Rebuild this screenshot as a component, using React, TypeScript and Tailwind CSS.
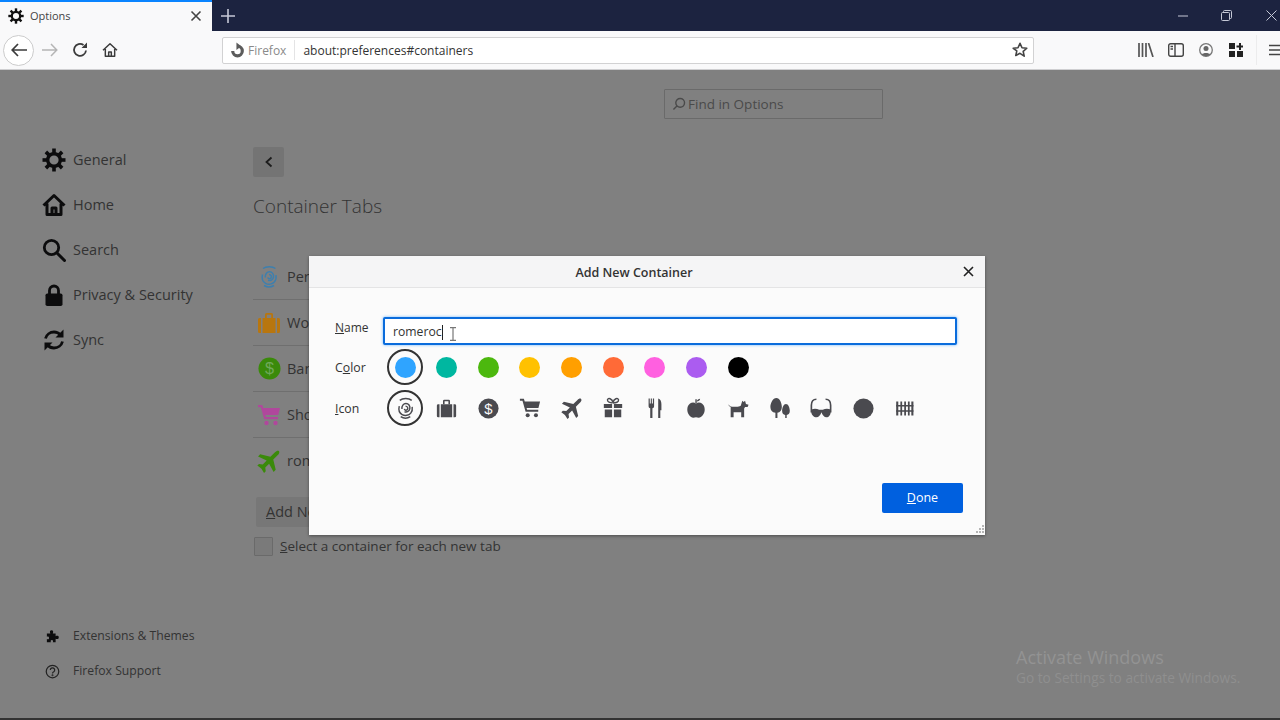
import type { ReactNode } from "react";

const uiFont = { fontFamily: '"Open Sans", "Noto Sans", sans-serif' };

function Svg({ size = 24, className, children }: { size?: number; className?: string; children: ReactNode }) {
  return (
    <svg width={size} height={size} viewBox="0 0 24 24" fill="currentColor" className={className}>
      {children}
    </svg>
  );
}

function Gear({ size }: { size: number }) {
  const spokes = [0, 45, 90, 135, 180, 225, 270, 315];
  return (
    <Svg size={size}>
      {spokes.map((a) => (
        <rect key={a} x="10.2" y="0.5" width="3.6" height="6" transform={`rotate(${a} 12 12)`} />
      ))}
      <circle cx="12" cy="12" r="6.3" fill="none" stroke="currentColor" strokeWidth="3.4" />
    </Svg>
  );
}

function Home({ size, stroke = 3 }: { size: number; stroke?: number }) {
  return (
    <Svg size={size}>
      <path
        d="M1.5 12.500 12 2.500l10.500 10M5 10.500V21.500h14V10.500M10 21v-6h4v6"
        fill="none"
        stroke="currentColor"
        strokeWidth={stroke}
        strokeLinejoin="round"
      />
    </Svg>
  );
}

function SearchGlass({ size }: { size: number }) {
  return (
    <Svg size={size}>
      <circle cx="9.500" cy="9.500" r="7.200" fill="none" stroke="currentColor" strokeWidth="2.800" />
      <path d="m15 15 7.500 7.500" stroke="currentColor" strokeWidth="3" strokeLinecap="round" />
    </Svg>
  );
}

function Lock({ size }: { size: number }) {
  return (
    <Svg size={size}>
      <path d="M7.500 11V7.500a4.500 4.500 0 0 1 9 0V11" fill="none" stroke="currentColor" strokeWidth="2.800" />
      <rect x="3.500" y="10.500" width="17" height="12.500" rx="1.800" />
    </Svg>
  );
}

function Sync({ size }: { size: number }) {
  return (
    <Svg size={size}>
      <path d="M3.500 10.500C4.500 6.500 8 4 12 4c2.800 0 5 1.200 6.500 3" fill="none" stroke="currentColor" strokeWidth="2.800" />
      <path d="M21.500 1.500v8h-8z" />
      <path d="M20.500 13.500C19.500 17.500 16 20 12 20c-2.800 0-5-1.200-6.500-3" fill="none" stroke="currentColor" strokeWidth="2.800" />
      <path d="M2.500 22.500v-8h8z" />
    </Svg>
  );
}

function Puzzle({ size }: { size: number }) {
  return (
    <Svg size={size}>
      <path d="M3 7h5.500C7.500 5 7.500 2 10.500 2s3 3 2 5H17v4.500c2-1 5-1 5 2s-3 3-5 2V21h-4.500c1-2 .500-3.500-1.500-3.500S8.500 19 9.500 21H3v-5c2 1 3.500.500 3.500-1.500S5 11.500 3 12.500z" />
    </Svg>
  );
}

function Help({ size }: { size: number }) {
  return (
    <svg width={size} height={size} viewBox="0 0 24 24" fill="none" stroke="currentColor" strokeWidth="2">
      <circle cx="12" cy="12" r="10" />
      <path d="M8.500 9.500a3.500 3.500 0 1 1 5.500 3c-1.300.8-2 1.400-2 2.800" />
      <circle cx="12" cy="18" r="0.600" />
    </svg>
  );
}

// tall, narrow print: a spiral in the middle and open arcs above and below
function Fingerprint({ size }: { size: number }) {
  return (
    <svg width={size} height={size} viewBox="0 0 24 24" fill="none" stroke="currentColor" strokeWidth="1.500">
      <path d="M6 3.500C9 1 15.500 1 18.500 3.500" />
      <path d="M12 9.500c2 0 3 2 2 3.500-.9 1.300-3 .9-3.200-.6" />
      <path d="M8.300 12.500c-.4-3 1.500-5.700 4.200-5.700s4.500 2.500 4 5.300c-.5 2.800-3 4-5.500 3.300" />
      <path d="M5.500 9.500c-1 4 .3 7.300 3 8.800 3 1.700 7 1 9-1.500 1.500-1.800 1.900-4 1.500-6.600" />
      <path d="M7 20.500c3 1.900 7 1.900 10 0" />
    </svg>
  );
}

function Briefcase({ size }: { size: number }) {
  return (
    <Svg size={size}>
      <path d="M8 7V3.500A1.500 1.500 0 0 1 9.500 2h5A1.500 1.500 0 0 1 16 3.500V7h-1.800V3.800H9.800V7z" />
      <path d="M1 8.500A1.500 1.500 0 0 1 2.500 7H4v15H2.500A1.500 1.500 0 0 1 1 20.500zM5.500 7h13v15h-13zM20 7h1.500A1.500 1.500 0 0 1 23 8.500v12a1.500 1.500 0 0 1-1.500 1.500H20z" />
    </Svg>
  );
}

function Dollar({ size, inner }: { size: number; inner: string }) {
  return (
    <svg width={size} height={size} viewBox="0 0 24 24">
      <circle cx="12" cy="12" r="11.500" fill="currentColor" />
      <text x="12" y="18" textAnchor="middle" fontSize="17" fontFamily='"Liberation Sans", sans-serif' fill={inner}>
        $
      </text>
    </svg>
  );
}

function Cart({ size }: { size: number }) {
  return (
    <Svg size={size}>
      <path d="M1 2h4.300l1 3H23l-1.800 7H8.300l.5 2H21v2.200H7.200L3.800 4.200H1z" />
      <circle cx="9.500" cy="20" r="2.200" />
      <circle cx="18.500" cy="20" r="2.200" />
    </Svg>
  );
}

function Plane({ size }: { size: number }) {
  return (
    <Svg size={size}>
      <path
        transform="rotate(45 12 12)"
        d="M12 -2c1.300 0 2 1.800 2 3.500v6.500l9 5.500v3l-9-2.700v5.500l3 2.300v2.400l-4.500-1.100h-1L7 23.500v-2.400l3-2.300v-5.500L1 16.500v-3L10 8V1.500C10-.2 10.700-2 12-2z"
      />
    </Svg>
  );
}

function Gift({ size }: { size: number }) {
  return (
    <Svg size={size}>
      <path d="M11.500 6.500C9 6.500 5.500 5.500 6 3s5-1.500 6 3c1-4.500 5.500-5.500 6-3s-3 3.500-6 3.500" fill="none" stroke="currentColor" strokeWidth="1.600" />
      <path d="M2 7.500h9v4.500H2zM13 7.500h9v4.500h-9zM3 13.500h8V22H3zM13 13.500h8V22h-8z" />
    </Svg>
  );
}

function Cutlery({ size }: { size: number }) {
  return (
    <Svg size={size}>
      <path d="M5 1.500h1.300V7h1.100V1.500h1.200V7h1.100V1.500H11v8.500c0 1.300-.8 2-1.800 2.400V23H6.800V12.400C5.800 12 5 11.300 5 10z" />
      <path d="M15.500 23V1.500c2.500.5 3.500 3 3.500 6.500v6.500h-1.200V23z" />
    </Svg>
  );
}

function Apple({ size }: { size: number }) {
  return (
    <Svg size={size}>
      <path d="M11.300 6.500V2.500h1.500v4z" />
      <path d="M12.800 5c.5-2 2-3 3.700-3-.2 2-1.700 3-3.700 3z" />
      <path d="M12 7c2-1.200 4.500-1.200 6.500.1C20.500 8.500 21.500 11 21.500 14c0 4.500-3.500 8.500-6.500 8.500-1.200 0-2-.5-3-.5s-1.800.5-3 .5c-3 0-6.500-4-6.500-8.500 0-3 1-5.500 3-6.900C7.500 5.800 10 5.800 12 7z" />
    </Svg>
  );
}

function Dog({ size }: { size: number }) {
  return (
    <Svg size={size}>
      <path d="M1.500 8c.3 1.500 1 2.500 2.500 3v11h3.200v-5.500h8.300V22h3.200V12.500l1-1.500h2.800l1-2.500-2.800-1-1-3.500-1.500 1.500-1.500-1.500-1.700 5.500c-1.500 1-3 1-4.500 1H5.500C3.800 10.500 2.500 9.800 1.500 8z" />
    </Svg>
  );
}

function Trees({ size }: { size: number }) {
  return (
    <Svg size={size}>
      <path d="M8 1c3.700 0 6 5.500 6 10 0 3.700-2 6-4.800 6.200V23H7v-5.800C3.500 17 1.500 14.700 1.500 11 1.500 6.500 4.300 1 8 1z" />
      <path d="M18.500 7.500c2.500 0 4.200 4 4.200 7.500 0 2.700-1.300 4.400-3.400 4.700V23h-1.600v-3.300c-2.100-.3-3.400-2-3.400-4.700 0-3.500 1.700-7.500 4.200-7.500z" />
    </Svg>
  );
}

function Glasses({ size }: { size: number }) {
  return (
    <Svg size={size}>
      <path d="M7 2.500C3.500 2.500 1.500 5 1.500 9v8" fill="none" stroke="currentColor" strokeWidth="1.800" />
      <path d="M17 2.500c3.500 0 5.500 2.500 5.500 6.500v8" fill="none" stroke="currentColor" strokeWidth="1.800" />
      <path d="M1.500 13.500c3-1 6-1 8.500.5h4c2.500-1.500 5.500-1.500 8.500-.5v3c0 3-2 5.500-4.500 5.500s-4.500-2.500-5.500-5.500c-1 3-3 5.500-5.500 5.500s-5.500-2.500-5.500-5.500z" />
    </Svg>
  );
}

function Fence({ size }: { size: number }) {
  return (
    <Svg size={size}>
      <path d="M2.500 4h2.400v16H2.500zM7.300 4h2v16h-2zM11.700 4h2v16h-2zM15.900 4h2v16h-2zM19.800 4h2.400v16h-2.400z" />
      <path d="M2.500 8h19.700v1.800H2.500zM2.500 14h19.700v1.800H2.500z" />
    </Svg>
  );
}

const colors = ["#2fa4ff", "#00b7a0", "#4cb80e", "#ffc100", "#ff9f00", "#ff6a37", "#ff60e0", "#ab5cf0", "#000000"];

const iconRow = [
  <Fingerprint size={23} />,
  <Briefcase size={21} />,
  <Dollar size={21} inner="#f9f9fa" />,
  <Cart size={22} />,
  <Plane size={22} />,
  <Gift size={22} />,
  <Cutlery size={22} />,
  <Apple size={22} />,
  <Dog size={22} />,
  <Trees size={22} />,
  <Glasses size={22} />,
  <Svg size={21}>
    <circle cx="12" cy="12" r="11.500" />
  </Svg>,
  <Fence size={21} />,
];

const nav = [
  { label: "General", icon: <Gear size={24} /> },
  { label: "Home", icon: <Home size={24} /> },
  { label: "Search", icon: <SearchGlass size={24} /> },
  { label: "Privacy & Security", icon: <Lock size={24} /> },
  { label: "Sync", icon: <Sync size={24} /> },
];

const containers = [
  { label: "Personal", color: "text-[#3d7fae]", icon: <Fingerprint size={24} /> },
  { label: "Work", color: "text-[#b8760f]", icon: <Briefcase size={24} /> },
  { label: "Banking", color: "text-[#3a8a0a]", icon: <Dollar size={23} inner="#6fa85a" /> },
  { label: "Shopping", color: "text-[#b0479c]", icon: <Cart size={24} /> },
  { label: "romero", color: "text-[#3a8a0a]", icon: <Plane size={24} /> },
];

function Swatch({ selected, children }: { selected?: boolean; children: ReactNode }) {
  return (
    <div
      className={`w-9 h-9 shrink-0 rounded-full flex items-center justify-center ${
        selected ? "border-2 border-[#333333]" : ""
      }`}
    >
      {children}
    </div>
  );
}

export default function App() {
  return (
    <div className="relative w-[1280px] h-[720px] overflow-hidden flex flex-col bg-[#808080]" style={uiFont}>
      {/* title bar */}
      <div className="h-[31px] shrink-0 flex bg-[#1c2340]">
        <div className="w-[212px] bg-[#f9f9fa] border-t-2 border-[#0a84ff] flex items-center pl-2 pr-[10px] pb-[1px]">
          <span className="text-[#111111]">
            <Gear size={16} />
          </span>
          <span className="ml-[6px] text-[11px] text-[#444444] flex-1">Options</span>
          <svg width="12" height="12" viewBox="0 0 12 12" stroke="#444444" strokeWidth="1.600">
            <path d="m1.500 1.500 9 9m0-9-9 9" />
          </svg>
        </div>
        <div className="w-8 flex items-center justify-center">
          <svg width="14" height="14" viewBox="0 0 14 14" stroke="#c5c8d6" strokeWidth="1.600">
            <path d="M7 0v14M0 7h14" />
          </svg>
        </div>
        <div className="flex-1" />
        <div className="flex items-center text-[#c5c8d6]">
          <svg width="10" height="2" viewBox="0 0 10 2" stroke="currentColor" className="mr-[33px]">
            <path d="M0 1h10" />
          </svg>
          <svg width="11" height="11" viewBox="0 0 11 11" fill="none" stroke="currentColor" className="mr-[34px]">
            <rect x="0.500" y="2.500" width="8" height="8" rx="1" />
            <path d="M2.500 2.500v-1a1 1 0 0 1 1-1h6a1 1 0 0 1 1 1v6a1 1 0 0 1-1 1h-1" />
          </svg>
          <svg width="11" height="11" viewBox="0 0 11 11" stroke="currentColor" className="mr-[3px]">
            <path d="m.5.5 10 10m0-10-10 10" />
          </svg>
        </div>
      </div>

      {/* toolbar */}
      <div className="h-[39px] shrink-0 flex items-center bg-[#f9f9fa] border-b border-[#cfcfd1] text-[#3b3b3b]">
        <div className="w-[31px] h-[31px] ml-[3px] shrink-0 rounded-full border border-[#cccccc] bg-white flex items-center justify-center">
          <svg width="16" height="14" viewBox="0 0 16 14" fill="none" stroke="currentColor" strokeWidth="1.700">
            <path d="M16 7H1.500M7 1 1.200 7 7 13" />
          </svg>
        </div>
        <svg width="16" height="14" viewBox="0 0 16 14" fill="none" stroke="#b5b5b5" strokeWidth="1.500" className="ml-[8px] shrink-0">
          <path d="M0 7h14.500M9 1l5.800 6L9 13" />
        </svg>
        <svg width="16" height="16" viewBox="0 0 16 16" fill="none" stroke="currentColor" strokeWidth="1.800" className="ml-[14px] shrink-0">
          <path d="M14 8.500A6 6 0 1 1 11.500 3" />
          <path d="M15 .5v5.500H9.500z" fill="currentColor" stroke="none" />
        </svg>
        <span className="ml-[14px] shrink-0">
          <Home size={16} stroke={2.2} />
        </span>
        <div className="ml-[104px] w-[812px] h-[27px] shrink-0 rounded-[2px] border border-[#d2d2d3] bg-white flex items-center">
          <svg width="17" height="17" viewBox="0 0 16 16" className="ml-[6px] text-[#5c5c5c]">
            <path d="M8 2.500a6 6 0 1 1-6 6h3a3 3 0 1 0 3-3z" fill="currentColor" />
            <path d="M7 .5 11.500 4 7 7.500z" fill="currentColor" />
          </svg>
          <span className="ml-[2px] pt-[1px] text-[12px] text-[#8a8a8a]">Firefox</span>
          <div className="ml-[8px] w-px h-[20px] bg-[#e4e4e5]" />
          <span className="ml-[8px] pt-[1px] text-[12px] text-[#333333]">about:preferences#containers</span>
          <div className="flex-1" />
          <svg width="16" height="16" viewBox="0 0 24 24" fill="none" stroke="#444444" strokeWidth="2.400" className="mr-[5px]" strokeLinejoin="round">
            <path d="m12 2 3 6.600 7.200.8-5.400 4.800 1.500 7.100L12 17l-6.300 3.300 1.500-7.100L1.800 9.400 9 8.600z" />
          </svg>
        </div>
        <svg width="16" height="14" viewBox="0 0 16 14" stroke="#555555" strokeWidth="1.700" className="ml-[104px] shrink-0">
          <path d="M1 0v14M4.500 0v14M8 0v14M10.500 0l4.500 14" />
        </svg>
        <svg width="16" height="14" viewBox="0 0 16 14" fill="none" stroke="#444444" strokeWidth="1.400" className="ml-[14px] shrink-0">
          <rect x="0.700" y="0.700" width="14.600" height="12.600" rx="2" />
          <path d="M7 .7v12.600M2.500 3.500h2.500M2.500 6h2.500" />
        </svg>
        <svg width="14" height="14" viewBox="0 0 14 14" className="ml-[15px] shrink-0">
          <circle cx="7" cy="7" r="6.300" fill="none" stroke="#777777" strokeWidth="1.300" />
          <circle cx="7" cy="5.500" r="2.500" fill="#666666" />
          <path d="M2.800 11.500c1-2 7.400-2 8.400 0a6 6 0 0 1-8.400 0z" fill="#666666" />
        </svg>
        <svg width="14" height="14" viewBox="0 0 14 14" fill="#222222" className="ml-[16px] shrink-0">
          <path d="M0 0h6v6H0zM0 8h6v6H0zM8 8h6v6H8zM10 0h2v2.500h2.500v2H12V7h-2V4.500H7.500v-2H10z" />
        </svg>
        <div className="ml-[13px] w-px h-[30px] bg-[#ececed] shrink-0" />
        <svg width="12" height="12" viewBox="0 0 12 12" stroke="#444444" strokeWidth="1.500" className="ml-[12px] shrink-0">
          <path d="M0 1.500h12M0 6h12M0 10.500h12" />
        </svg>
      </div>

      {/* dimmed preferences page */}
      <div className="flex-1 flex min-h-0 text-[#333333]">
        <div className="w-[253px] shrink-0 flex flex-col pl-[42px] pt-[78px] pb-[39px]">
          <div className="flex flex-col gap-[21px]">
            {nav.map((item) => (
              <div key={item.label} className="flex items-center h-6 gap-[7px] text-[14.500px]">
                <span className="text-[#0c0c0d]">{item.icon}</span>
                <span>{item.label}</span>
              </div>
            ))}
          </div>
          <div className="flex-1" />
          <div className="flex flex-col gap-[19px] text-[12.200px]">
            <div className="flex items-center h-4 gap-[13px] pl-[3px]">
              <span className="text-[#0c0c0d]">
                <Puzzle size={15} />
              </span>
              <span>Extensions &amp; Themes</span>
            </div>
            <div className="flex items-center h-4 gap-[13px] pl-[3px]">
              <span className="text-[#222222]">
                <Help size={15} />
              </span>
              <span>Firefox Support</span>
            </div>
          </div>
        </div>

        <div className="flex-1 pt-[19px] min-w-0">
          <div className="ml-[411px] w-[219px] h-[30px] border border-[#6a6a6a] rounded-[1px] flex items-center pl-[7px] gap-[2px] text-[13.500px] text-[#4a4a4a]">
            <svg width="14" height="14" viewBox="0 0 24 24" fill="none" stroke="#4a4a4a" strokeWidth="2.400">
              <circle cx="14" cy="10" r="7.500" />
              <path d="m8.500 15.500-6 6" />
            </svg>
            <span>Find in Options</span>
          </div>
          <div className="mt-[28px] w-[31px] h-[30px] rounded-[2px] bg-[#747474] flex items-center justify-center">
            <svg width="10" height="12" viewBox="0 0 10 12" fill="none" stroke="#1c1c1c" strokeWidth="1.800">
              <path d="M7.500 1.500 2.500 6l5 4.500" />
            </svg>
          </div>
          <h1 className="mt-[14px] text-[19px] leading-[30px] font-light text-[#333333]">Container Tabs</h1>
          <div className="mt-[33px]">
            {containers.map((c, i) => (
              <div
                key={c.label}
                className={`h-[46px] flex items-center w-[600px] ${i < 4 ? "border-b border-[#6f6f6f]" : ""}`}
              >
                <span className={`w-[36px] flex justify-center -ml-[2px] ${c.color}`}>{c.icon}</span>
                <span className="text-[14.500px]">{c.label}</span>
              </div>
            ))}
          </div>
          <div className="mt-[13px] ml-[3px] w-[200px] h-[30px] rounded-[2px] bg-[#777777] flex items-center pl-[10px] text-[14.500px]">
            <span>
              <span className="underline">A</span>dd New Container
            </span>
          </div>
          <div className="mt-[9px] flex items-center ml-[1px] gap-[7px] text-[13.500px]">
            <span className="w-[19px] h-[19px] border border-[#6a6a6a] bg-[#7a7a7a] rounded-[1px]" />
            <span>
              <span className="underline">S</span>elect a container for each new tab
            </span>
          </div>
        </div>
      </div>

      <div className="h-[2px] shrink-0 bg-[#333333]" />

      {/* activation watermark */}
      <div className="absolute left-[1016px] top-[645px] pointer-events-none">
        <div className="text-[18px] leading-[24px] text-[#939393]">Activate Windows</div>
        <div className="text-[13.700px] leading-[18px] text-[#8f8f8f]">Go to Settings to activate Windows.</div>
      </div>

      {/* dialog */}
      <div className="absolute left-[309px] top-[256px] w-[676px] h-[279px] bg-[#fbfbfb] shadow-[0_1px_3px_rgba(0,0,0,0.4)] flex flex-col text-[#333333]">
        <div className="h-[32px] shrink-0 bg-[#f5f5f6] border-b border-[#e4e4e5] flex items-center">
          <div className="flex-1 text-center pr-[4px] pt-[3px] text-[12.500px] font-semibold text-[#333333]">
            Add New Container
          </div>
          <svg width="11" height="11" viewBox="0 0 11 11" stroke="#222222" strokeWidth="1.600" className="mr-[11px]">
            <path d="m1 1 9 9m0-9-9 9" />
          </svg>
        </div>

        <div className="flex-1 flex flex-col pl-[26px] pr-[22px] min-h-0">
          <div className="flex items-center mt-[29px]">
            <span className="w-[48px] text-[12px] -mt-[7px]">
              <span className="underline">N</span>ame
            </span>
            <div className="w-[574px] h-[28px] rounded-[2px] border-2 border-[#0a6cdc] bg-white shadow-[0_0_3px_rgba(10,132,255,0.6)] flex items-center pl-[8px] pt-[2px] text-[12.200px]">
              <span>romeroc</span>
              <span className="w-px h-[15px] bg-[#222222]" />
              <span className="ml-[7px] mt-[3px]">
                <svg width="6" height="14" viewBox="0 0 6 14" fill="none" stroke="#777777" strokeWidth="1.200">
                  <path d="M0 .6h6M3 .6v12.800M0 13.400h6" />
                </svg>
              </span>
            </div>
          </div>

          <div className="flex items-center mt-[4px]">
            <span className="w-[52px] text-[12.300px] pt-[2px]">
              C<span className="underline">o</span>lor
            </span>
            <div className="flex gap-[5.650px]">
              {colors.map((c, i) => (
                <Swatch key={c} selected={i === 0}>
                  <span className="block w-[21px] h-[21px] rounded-full" style={{ backgroundColor: c }} />
                </Swatch>
              ))}
            </div>
          </div>

          <div className="flex items-center mt-[5px]">
            <span className="w-[52px] text-[12.300px] pt-[2px]">
              <span className="underline">I</span>con
            </span>
            <div className="flex gap-[5.650px] text-[#4a4a4f]">
              {iconRow.map((icon, i) => (
                <Swatch key={i} selected={i === 0}>
                  {icon}
                </Swatch>
              ))}
            </div>
          </div>

          <div className="flex-1" />
          <div className="flex justify-end pb-[22px]">
            <div className="w-[81px] h-[30px] rounded-[2px] bg-[#0060df] text-white text-[12.500px] flex items-center justify-center">
              <span>
                <span className="underline">D</span>one
              </span>
            </div>
          </div>
        </div>

        {/* resize grip */}
        <svg width="9" height="9" viewBox="0 0 9 9" fill="#b5b5b5" className="absolute right-[1px] bottom-[1px]">
          <path d="M7 0h2v2H7zM4 3h2v2H4zM7 3h2v2H7zM1 6h2v2H1zM4 6h2v2H4zM7 6h2v2H7z" />
        </svg>
      </div>
    </div>
  );
}
